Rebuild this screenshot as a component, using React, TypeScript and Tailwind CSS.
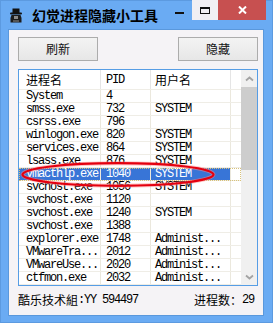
import React from "react";

const rows: [string, string, string][] = [
  ["System", "4", ""],
  ["smss.exe", "732", "SYSTEM"],
  ["csrss.exe", "796", ""],
  ["winlogon.exe", "820", "SYSTEM"],
  ["services.exe", "864", "SYSTEM"],
  ["lsass.exe", "876", "SYSTEM"],
  ["vmacthlp.exe", "1040", "SYSTEM"],
  ["svchost.exe", "1056", "SYSTEM"],
  ["svchost.exe", "1120", ""],
  ["svchost.exe", "1240", "SYSTEM"],
  ["svchost.exe", "1388", ""],
  ["explorer.exe", "1748", "Administ..."],
  ["VMwareTra...", "2012", "Administ..."],
  ["VMwareUse...", "2020", "Administ..."],
  ["ctfmon.exe", "2032", "Administ..."],
];

const mono = "font-['Liberation_Mono',monospace] text-[12px] tracking-[-1.2px]";
const cjk = "font-['Noto_Sans_CJK_SC',sans-serif] text-[12px]";

const Chevron = ({ down }: { down?: boolean }) => (
  <svg width="9" height="6" viewBox="0 0 9 6">
    <path
      d={down ? "M1 1.5 L4.5 4.5 L8 1.5" : "M1 4.5 L4.5 1.5 L8 4.5"}
      fill="none"
      stroke="#a3a3a3"
      strokeWidth="1.8"
    />
  </svg>
);

const App = () => {
  const selected = 6;
  return (
    <div className="w-[273px] h-[323px] bg-[#6aabf3] flex flex-col border border-[#5c9ae0]">
      {/* title bar */}
      <div className="h-[28px] flex items-start shrink-0">
        <div className="ml-[8px] mt-[7px]">
          <svg width="14" height="15" viewBox="0 0 14 15">
            <rect x="3.5" y="0.5" width="7" height="4.5" fill="#111" />
            <rect x="1" y="4.5" width="12" height="2" rx="1" fill="#111" />
            <path d="M2.5 7 h9 l1 3 v4.5 h-11 v-4.5 z" fill="#1c1c1c" />
            <rect x="5" y="8" width="4" height="3" fill="#8a8a8a" />
            <rect x="4" y="12" width="6" height="2" fill="#555" />
          </svg>
        </div>
        <div className="ml-[9px] mt-[5px] font-['Noto_Sans_CJK_SC',sans-serif] text-[14px] leading-[18px] font-bold text-black">
          幻觉进程隐藏小工具
        </div>
        <div className="flex-1" />
        <div className="w-[26px] h-[20px] -mt-px flex justify-center">
          <div className="mt-[12px] w-[9px] h-[2px] bg-[#111]" />
        </div>
        <div className="w-[26px] h-[20px] -mt-px bg-[#f1eff3] flex justify-center">
          <div className="mt-[7px] w-[10px] h-[7px] border border-t-2 border-[#111]" />
        </div>
        <div className="w-[48px] h-[20px] -mt-px bg-[#c75050] flex items-center justify-center">
          <svg width="9" height="8" viewBox="0 0 9 8">
            <path d="M1 0.5 L8 7.5 M8 0.5 L1 7.5" stroke="#fff" strokeWidth="2" />
          </svg>
        </div>
        <div className="w-[6px]" />
      </div>

      {/* client area */}
      <div className="ml-[7px] mr-[8px] mb-[6px] flex-1 bg-[#f5f3f6] border border-[#5a98dc] flex flex-col pt-[7px] pl-[9px] pr-[5px]">
        <div className="flex justify-between h-[24px]">
          <button className={`w-[80px] h-[24px] border border-[#acacac] bg-linear-to-b from-[#f3f3f3] to-[#e7e7e7] text-[#111] ${cjk}`}>
            刷新
          </button>
          <button className={`w-[80px] h-[24px] border border-[#acacac] bg-linear-to-b from-[#f3f3f3] to-[#e7e7e7] text-[#111] ${cjk}`}>
            隐藏
          </button>
        </div>

        {/* list view */}
        <div className="mt-[8px] h-[217px] border border-[#569de5] bg-white flex overflow-hidden">
          <div className="w-[222px] relative overflow-hidden">
            <div className="flex h-[20px] items-center text-black border-b border-[#efede6]">
              <div className={`w-[82px] h-full border-r border-[#e5e5e5] pl-[7px] flex items-center ${cjk}`}>进程名</div>
              <div className={`w-[50px] h-full border-r border-[#e5e5e5] pl-[5px] flex items-center ${mono}`}>PID</div>
              <div className={`w-[80px] h-full border-r border-[#e5e5e5] pl-[4px] flex items-center ${cjk}`}>用户名</div>
              <div className="w-[10px] h-full" />
            </div>
            {rows.map((r, i) => {
              const sel = i === selected;
              const cell = sel ? "bg-[#3875d7] text-white" : "text-black";
              return (
                <div key={i} className={`flex h-[13px] leading-[12px] border-b border-[#efede6] ${mono} ${sel ? "outline outline-1 outline-dotted outline-[#d8c27a] -outline-offset-1" : ""}`}>
                  <div className={`w-[82px] h-full border-r border-[#ebe8dd] pl-[7px] whitespace-nowrap ${cell}`}>{r[0]}</div>
                  <div className={`w-[50px] h-full border-r border-[#ebe8dd] pl-[5px] ${cell}`}>{r[1]}</div>
                  <div className={`w-[80px] h-full border-r border-[#ebe8dd] pl-[4px] whitespace-nowrap ${cell}`}>{r[2]}</div>
                  <div className="w-[10px] h-full" />
                </div>
              );
            })}
            <svg className="absolute inset-0 pointer-events-none" width="222" height="215" viewBox="0 0 222 215">
              <ellipse cx="99" cy="104.5" rx="95.5" ry="11.3" fill="none" stroke="#ff8a8a" strokeOpacity="0.5" strokeWidth="4" />
              <ellipse cx="99" cy="104.5" rx="95.5" ry="11.3" fill="none" stroke="#e4000f" strokeWidth="2.2" />
            </svg>
          </div>
          <div className="w-[16px] flex flex-col bg-[#f0f0f0]">
            <div className="h-[17px] flex items-center justify-center">
              <Chevron />
            </div>
            <div className="h-[83px] bg-[#cdcdcd]" />
            <div className="flex-1" />
            <div className="h-[17px] flex items-center justify-center">
              <Chevron down />
            </div>
          </div>
        </div>

        {/* status */}
        <div className="flex-1 flex items-center justify-between pr-[4px] text-black pb-[1px]">
          <div className="flex items-center">
            <span className={cjk}>酷乐技术組</span>
            <span className={mono}>:YY 594497</span>
          </div>
          <div className="flex items-center">
            <span className={cjk}>进程数：</span>
            <span className={mono}>29</span>
          </div>
        </div>
      </div>
    </div>
  );
};

export default App;
